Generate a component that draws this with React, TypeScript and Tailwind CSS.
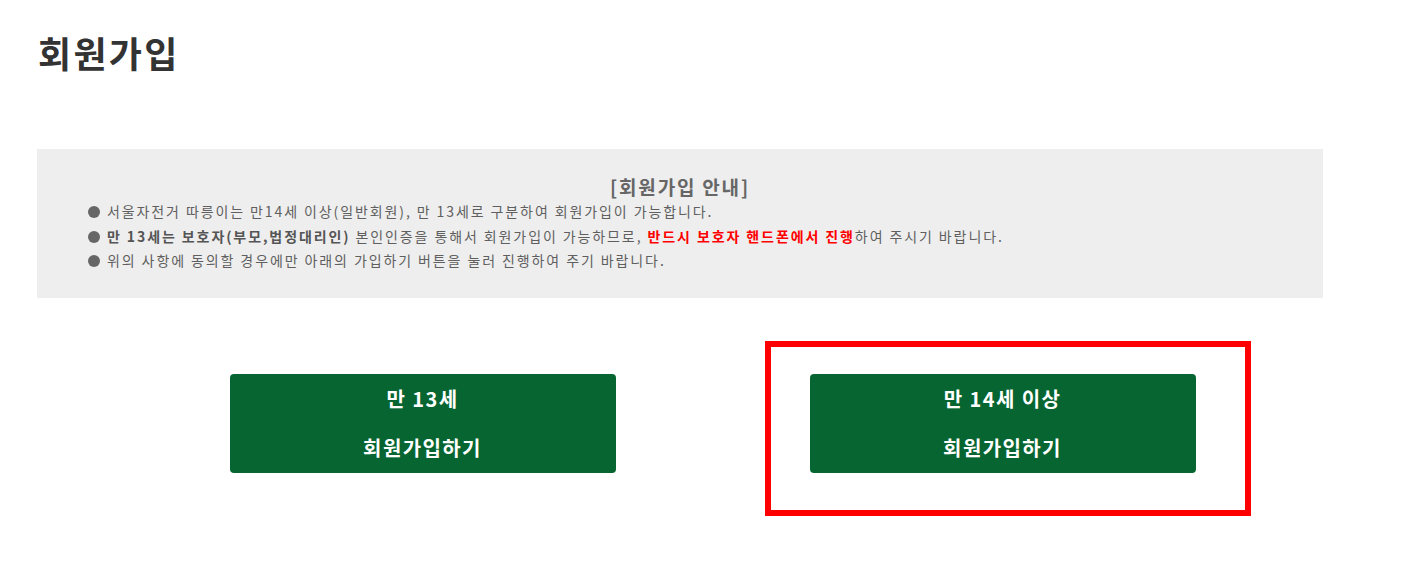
const font = "font-['Malgun_Gothic','Noto_Sans_CJK_KR','Noto_Sans',sans-serif]";

function JoinButton({ top, highlight }: { top: string; highlight?: boolean }) {
  return (
    <div className="relative">
      <button
        type="button"
        className="w-[386px] h-[99px] rounded-[4px] bg-[#066531] text-white font-bold text-[20px] tracking-[1.4px] flex flex-col items-center justify-center gap-[25px] leading-[24px]"
      >
        <span>{top}</span>
        <span>회원가입하기</span>
      </button>
      {highlight && (
        <div className="absolute left-[-45px] top-[-33px] w-[486px] h-[175px] border-[6px] border-[#ff0000] pointer-events-none" />
      )}
    </div>
  );
}

function Bullet() {
  return <span className="inline-block w-[12px] h-[12px] rounded-full bg-[#666666] mr-[7px] align-[-1px]" />;
}

export default function App() {
  return (
    <div className={`${font} bg-white min-h-screen w-[1425px] h-[564px] overflow-hidden`}>
      <h1 className="pl-[38px] pt-[29px] text-[36px] font-bold text-[#333333] leading-[46px] tracking-[2.3px]">
        회원가입
      </h1>

      <div className="ml-[37px] mt-[74px] w-[1286px] h-[149px] bg-[#eeeeee] pt-[26px] pl-[51px]">
        <h2 className="text-center pr-[51px] text-[19px] font-bold text-[#666666] leading-[24px] tracking-[1.8px]">
          [회원가입 안내]
        </h2>
        <ul className="text-[14px] text-[#5f5f5f] leading-[24.5px] tracking-[1.9px]">
          <li>
            <Bullet />서울자전거 따릉이는 만14세 이상(일반회원), 만 13세로 구분하여 회원가입이 가능합니다.
          </li>
          <li>
            <Bullet />
            <b className="text-[#555555]">만 13세는 보호자(부모,법정대리인)</b> 본인인증을 통해서 회원가입이 가능하므로,{' '}
            <b className="text-[#ff0000]">반드시 보호자 핸드폰에서 진행</b>하여 주시기 바랍니다.
          </li>
          <li>
            <Bullet />위의 사항에 동의할 경우에만 아래의 가입하기 버튼을 눌러 진행하여 주기 바랍니다.
          </li>
        </ul>
      </div>

      <div className="mt-[76px] flex justify-center gap-[194px]">
        <JoinButton top="만 13세" />
        <JoinButton top="만 14세 이상" highlight />
      </div>
    </div>
  );
}
